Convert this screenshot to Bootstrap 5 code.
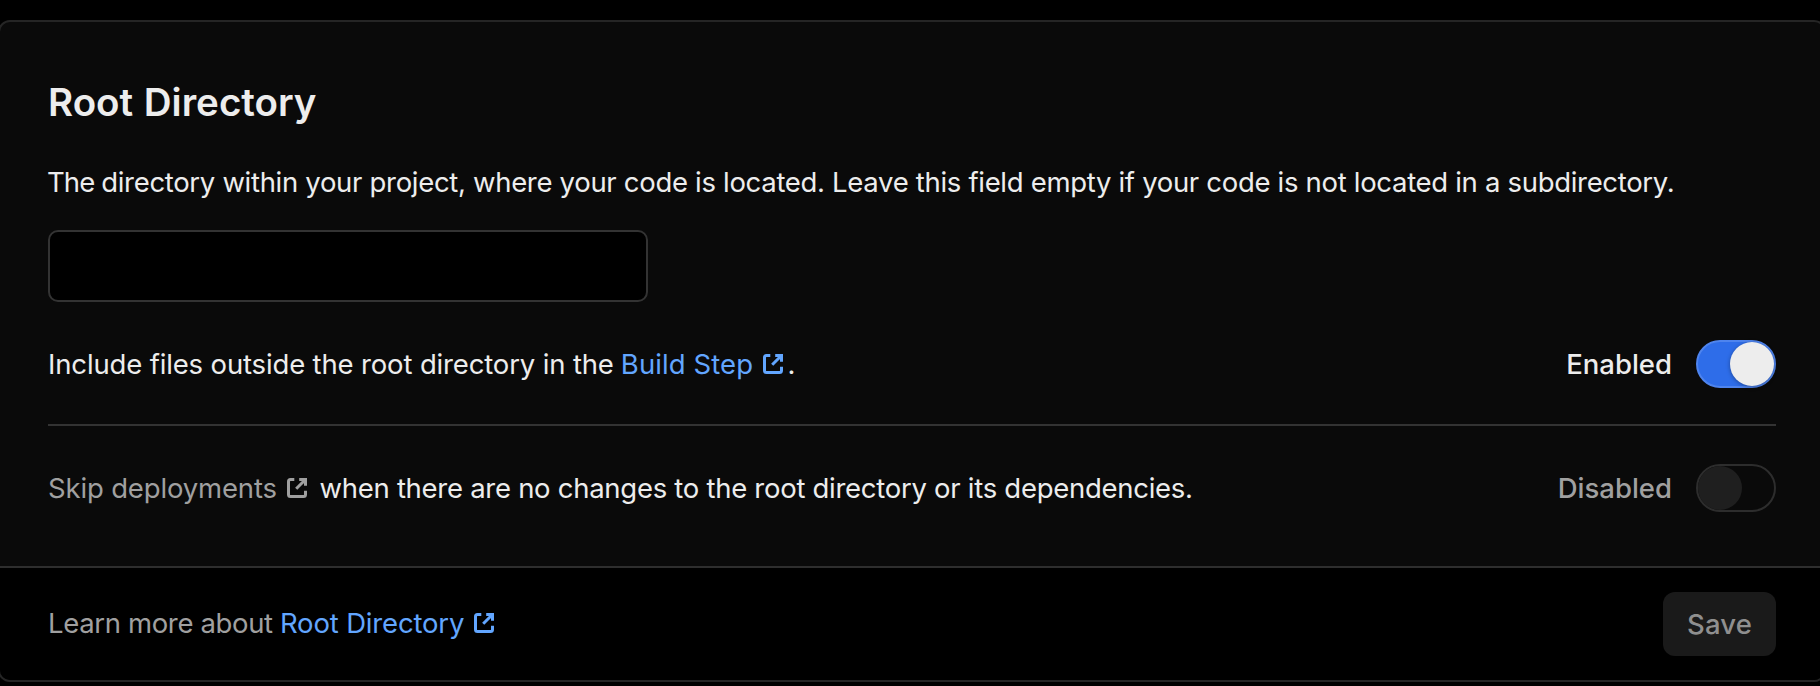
<!DOCTYPE html>
<html lang="en" data-bs-theme="dark">
<head>
<meta charset="utf-8">
<meta name="viewport" content="width=device-width, initial-scale=1">
<title>Root Directory</title>
<link href="https://cdn.jsdelivr.net/npm/bootstrap@5.3.0/dist/css/bootstrap.min.css" rel="stylesheet">
<style>
body{background:#000;color:#ededed;font-family:Inter,"Liberation Sans",sans-serif;font-size:27.5px;line-height:40px;overflow:hidden;white-space:nowrap}
.settings-card{margin:20px -6px 0 -2px;border:2px solid #252525;border-radius:12px;background:#0a0a0a;color:#ededed;overflow:hidden}
.settings-card .card-body{height:544px;padding:56px 48px 0}
.settings-card .card-title{font-size:38.5px;line-height:48px;font-weight:600;letter-spacing:0;word-spacing:1px;margin-bottom:36px}
.settings-card .card-footer{height:114px;padding:24px 48px;background:#000;border-top:2px solid #2e2e2e;border-radius:0;color:#a0a0a0}
.lead-in{letter-spacing:-.31px;margin:0 0 28px -1px}
.dir-input,.dir-input:focus{width:600px;height:72px;background:#000;border:2px solid #333;border-radius:10px;margin-bottom:38px;box-shadow:none}
.option-row{height:48px}
.option-rule{height:2px;background:#333;margin:36px 0 38px}
.link-blue{color:#62a6ff}
.tone-muted{color:#a0a0a0}
.ext-icon{width:20px;height:20px;flex:none;fill:none;stroke:currentColor;stroke-width:3}
.state-label{font-weight:500;margin-right:24px}
.toggle{width:80px;height:48px;border:2px solid #2d2d2d;border-radius:24px;background:#0a0a0a}
.toggle .knob{width:44px;height:44px;border-radius:22px;background:#1f1f1f}
.toggle.is-on{background:#2e6de9;border-color:#4e84ee}
.toggle.is-on .knob{background:#ededed;box-shadow:0 1px 4px rgba(0,0,0,.35)}
.footer-note{padding-bottom:2px}
.btn-save,.btn-save:disabled{width:113px;height:64px;border:0;border-radius:12px;background:#1a1a1a;color:#8f8f8f;font-size:27.5px;line-height:40px;font-weight:500;letter-spacing:.1px;opacity:1;padding:0}
</style>
</head>
<body>
<svg class="d-none" xmlns="http://www.w3.org/2000/svg">
  <symbol id="external" viewBox="0 0 20 20">
    <path d="M7.3 1.5H3.5Q1.5 1.5 1.5 3.5V16.5Q1.5 18.5 3.5 18.5H16.5Q18.5 18.5 18.5 16.5V12.8M12.2 1.5H18.5V7.8M18 2L9.2 10.8"/>
  </symbol>
</svg>
<main class="card settings-card">
  <div class="card-body">
    <h2 class="card-title">Root Directory</h2>
    <p class="lead-in"><span style="letter-spacing:-.9px">The </span>directory within your project, where your code is located. Leave this field empty if your code is not located in a subdirectory.</p>
    <input type="text" class="form-control dir-input" aria-label="Root Directory">
    <div class="option-row d-flex align-items-center">
      <span style="letter-spacing:-.15px;width:572.8px">Include files outside the root directory in the</span>
      <a href="#" class="link-blue text-decoration-none d-flex align-items-center"><span style="letter-spacing:.1px;width:142.2px">Build Step</span><svg class="ext-icon"><use href="#external"/></svg></a><span style="margin-left:4.5px">.</span>
      <span class="state-label ms-auto">Enabled</span>
      <span class="toggle is-on d-flex justify-content-end" role="switch" aria-checked="true"><span class="knob"></span></span>
    </div>
    <div class="option-rule"></div>
    <div class="option-row d-flex align-items-center">
      <a href="#" class="tone-muted text-decoration-none d-flex align-items-center"><span style="letter-spacing:-.16px;width:239px">Skip deployments</span><svg class="ext-icon"><use href="#external"/></svg></a>
      <span style="letter-spacing:-.28px;margin-left:12.5px">when there are no changes to the root directory or its dependencies.</span>
      <span class="state-label tone-muted ms-auto">Disabled</span>
      <span class="toggle d-flex" role="switch" aria-checked="false"><span class="knob"></span></span>
    </div>
  </div>
  <div class="card-footer d-flex align-items-center justify-content-between">
    <div class="footer-note d-flex align-items-center">
      <span style="letter-spacing:-.35px;width:232px">Learn more about</span>
      <a href="#" class="link-blue text-decoration-none d-flex align-items-center"><span style="letter-spacing:-.17px;width:194px">Root Directory</span><svg class="ext-icon"><use href="#external"/></svg></a>
    </div>
    <button type="button" class="btn btn-save" disabled>Save</button>
  </div>
</main>
<script src="https://cdn.jsdelivr.net/npm/bootstrap@5.3.0/dist/js/bootstrap.bundle.min.js"></script>
</body>
</html>
